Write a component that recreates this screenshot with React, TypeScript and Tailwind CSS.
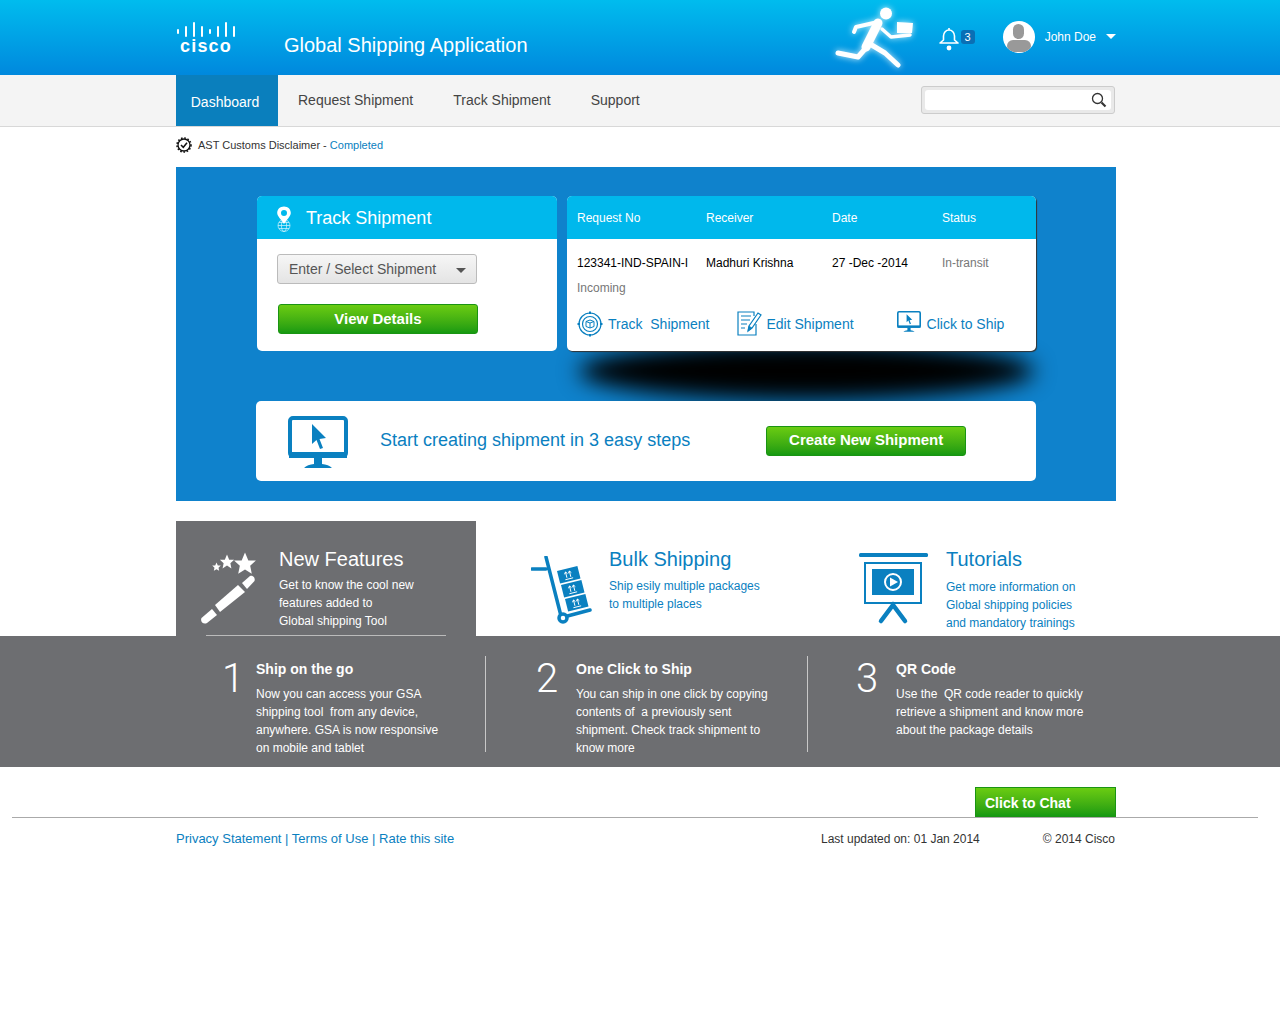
const greenBtn = 'bg-gradient-to-b from-[#6acc12] to-[#159a12] border border-[#1a9413] text-white font-bold';

function CiscoLogo() {
    const bars = [
        [1, 8, 5], [9, 5, 11], [17, 1, 15], [25, 5, 11], [33, 8, 5], [41, 5, 11], [49, 1, 15], [57, 5, 11],
    ];
    return (
        <div className="w-[60px] flex flex-col items-center">
            <svg width="60" height="16" viewBox="0 0 60 16" fill="#fff">
                {bars.map(([x, y, h]) => (
                    <rect key={x} x={x} y={y} width="2" height={h} rx="1" />
                ))}
            </svg>
            <span className="text-[18px] leading-[16px] font-bold tracking-[1.2px] text-white mt-[1px]">cisco</span>
        </div>
    );
}

function Runner() {
    return (
        <svg width="80" height="62" viewBox="0 0 80 62" className="drop-shadow-[0_0_3px_rgba(255,255,255,0.8)]">
            <circle cx="51" cy="6.5" r="6" fill="#fff" />
            <g fill="none" stroke="#fff" strokeLinecap="round" strokeLinejoin="round">
                <path d="M43 15 L21 20 L19 25" strokeWidth="4" />
                <path d="M43 16 L31 40" strokeWidth="9" />
                <path d="M30 42 L23 50 L3 46" strokeWidth="5" />
                <path d="M35 37 L50 46 L63 58" strokeWidth="5" />
                <path d="M47 22 L56 30 L75 28" strokeWidth="3.5" />
            </g>
            <path d="M62 15 L78 16 L77 26 L62 26 Z" fill="#fff" />
        </svg>
    );
}

function NotifyBell() {
    return (
        <svg width="20" height="24" viewBox="0 0 20 24" fill="none" stroke="#fff" strokeWidth="1.6" strokeLinejoin="round">
            <path d="M10 1 V3 M4.5 13 V9 C4.5 5.5 7 3 10 3 C13 3 15.5 5.5 15.5 9 V13 L19 16 H1 Z" />
            <circle cx="10" cy="21" r="2.4" fill="#fff" stroke="none" />
        </svg>
    );
}

function GearCheck() {
    return (
        <svg width="16" height="16" viewBox="0 0 16 16" fill="none" stroke="#111">
            <circle cx="8" cy="8" r="6" strokeWidth="1.3" />
            <circle cx="8" cy="8" r="7" strokeWidth="1.6" strokeDasharray="1.6 1.7" />
            <path d="M5 8 L7.3 10.3 L11 5.8" strokeWidth="1.5" />
        </svg>
    );
}

function PinGlobe() {
    return (
        <svg width="16" height="26" viewBox="0 0 16 26" fill="none">
            <g stroke="#fff" strokeWidth="0.7" opacity="0.85">
                <circle cx="8" cy="19.5" r="6" />
                <ellipse cx="8" cy="19.5" rx="2.6" ry="6" />
                <path d="M2 19.5 H14 M3 16.5 H13 M3 22.5 H13" />
            </g>
            <path fillRule="evenodd" clipRule="evenodd" d="M8 0.5 C4 0.5 1.2 3.3 1.2 7 C1.2 10.5 5.5 13.5 8 18 C10.5 13.5 14.8 10.5 14.8 7 C14.8 3.3 12 0.5 8 0.5 Z M8 4 A3 3 0 1 1 8 10 A3 3 0 1 1 8 4 Z" fill="#fff" />
        </svg>
    );
}

function TrackIcon() {
    return (
        <svg width="26" height="26" viewBox="0 0 26 26" fill="none" stroke="#0a80c0">
            <circle cx="13" cy="13" r="11" strokeWidth="1.2" />
            <circle cx="13" cy="13" r="7.5" strokeWidth="1.2" />
            <path d="M9 10.5 L13 9 L17 10.5 V15.5 L13 17 L9 15.5 Z M9 10.5 L13 12 L17 10.5 M13 12 V17" strokeWidth="1" />
            <path d="M13 0.5 V3 M13 23 V25.5 M0.5 13 H3 M23 13 H25.5" strokeWidth="2" />
        </svg>
    );
}

function EditIcon() {
    return (
        <svg width="25" height="25" viewBox="0 0 25 25" fill="none" stroke="#0a80c0">
            <path d="M17 5 V1 H1 V24 H19 V13" strokeWidth="1.2" />
            <path d="M4 5 H14 M4 9 H13 M4 13 H10 M4 17 H8" strokeWidth="1.2" />
            <path d="M11 20 L12 15 L21 2 L24 4 L15 17 Z" fill="#fff" strokeWidth="1.2" />
            <path d="M11 20 L12 15 L15 17 Z" fill="#0a80c0" strokeWidth="0.5" />
        </svg>
    );
}

function MonitorIcon({ size }: { size: number }) {
    return (
        <svg width={size} height={(size * 52) / 60} viewBox="0 0 60 52" fill="none" className="block">
            <rect x="2" y="2" width="56" height="38" rx="3" stroke="#0a80c0" strokeWidth="4" />
            <rect x="1" y="36" width="58" height="6" fill="#0a80c0" />
            <path d="M24 8 L24 28 L28.5 24 L32 33 L35 32 L31.5 23 L38 22 Z" fill="#0a80c0" />
            <path d="M26 42 H34 V48 C38 48.500 42 49.500 44 52 H16 C18 49.500 22 48.500 26 48 Z" fill="#0a80c0" />
        </svg>
    );
}

function Wand() {
    const star = 'M0 -10 L2.9 -3.1 L9.5 -3.1 L4.5 1.6 L5.9 8.5 L0 4.8 L-5.9 8.5 L-4.5 1.6 L-9.5 -3.1 L-2.9 -3.1 Z';
    return (
        <svg width="56" height="78" viewBox="0 0 56 78" fill="#fff">
            <path d={star} transform="translate(44 16) scale(1.15)" />
            <path d={star} transform="translate(26 14) scale(0.75)" />
            <path d={star} transform="translate(15.5 19) scale(0.45)" />
            <path d="M41 35 L49 28 C52 27 54.500 30 53.500 33 L46 41 Z" />
            <path d="M14 57 L37 37 L44 44 L19 64 Z" />
            <path d="M0.500 70 L11 61 L16 67 L6 75 C2 77 -1 73 0.500 70 Z" />
        </svg>
    );
}

function Trolley() {
    return (
        <svg width="62" height="72" viewBox="0 0 62 72">
            <path d="M1 13 H15 M15 1 L30 60 M29 62 L59 54" fill="none" stroke="#0a80c0" strokeWidth="3.5" strokeLinecap="round" />
            <circle cx="32" cy="62" r="4" fill="#fff" stroke="#0a80c0" strokeWidth="3.5" />
            {[[26, 15], [30, 29], [34, 43]].map(([x, y]) => (
                <g key={y} transform={`translate(${x} ${y}) rotate(-14)`}>
                    <rect width="21" height="13" fill="#0a80c0" />
                    <path d="M8 3 V9 M12 3 V9 M6 10.5 H14 M6.5 5 L8 3 L9.5 5 M10.5 5 L12 3 L13.5 5" stroke="#fff" fill="none" strokeWidth="0.9" />
                </g>
            ))}
        </svg>
    );
}

function Screen() {
    return (
        <svg width="70" height="72" viewBox="0 0 70 72">
            <rect x="0" y="0" width="69" height="4" rx="1.5" fill="#0a80c0" />
            <rect x="6" y="10" width="56" height="40" fill="#fff" stroke="#0a80c0" strokeWidth="2" />
            <rect x="13" y="16" width="42" height="26" fill="#0a80c0" />
            <circle cx="34" cy="29" r="8" fill="none" stroke="#fff" strokeWidth="2" />
            <path d="M31 24.5 L39 29 L31 33.5 Z" fill="#fff" />
            <path d="M22 68 L34 52 L46 68" fill="none" stroke="#0a80c0" strokeWidth="4.5" strokeLinecap="round" />
        </svg>
    );
}

function Tip({ n, title, lines, cls, numCls }: { n: string; title: string; lines: string[]; cls: string; numCls: string }) {
    return (
        <div className={`flex h-[96px] ${cls}`}>
            <div className={`w-[40px] font-['Roboto',sans-serif] text-[40px] leading-[46px] text-white font-light ${numCls}`}>{n}</div>
            <div className="pt-[4px]">
                <div className="text-[14px] leading-[18px] font-bold text-white">{title}</div>
                <div className="mt-[7px] text-[12px] leading-[18px] text-white whitespace-pre">
                    {lines.map((l) => (
                        <div key={l}>{l}</div>
                    ))}
                </div>
            </div>
        </div>
    );
}

export default function App() {
    return (
        <div className="min-h-[1030px] bg-white text-[#333] font-['Liberation_Sans',Arial,sans-serif]">
            {/* HEADER */}
            <div className="h-[75px] bg-gradient-to-b from-[#00bcee] to-[#0088dd]">
                <div className="ml-[176px] w-[940px] h-full flex items-center relative">
                    <CiscoLogo />
                    <div className="ml-[48px] text-[20px] leading-[24px] text-white mt-[14px]">Global Shipping Application</div>
                    <div className="ml-auto flex items-center">
                        <div className="mt-[1px] mr-[24px]">
                            <Runner />
                        </div>
                        <div className="flex items-center mr-[28px] mt-[3px]">
                            <NotifyBell />
                            <span className="-mt-[5px] ml-[2px] w-[14px] h-[14px] rounded-[3px] bg-[#0a6fb5] text-white text-[11px] leading-[14px] text-center">3</span>
                        </div>
                        <div className="w-[32px] h-[32px] rounded-full bg-white overflow-hidden flex flex-col items-center -mt-[2px]">
                            <span className="mt-[3px] w-[11px] h-[15px] rounded-full bg-[#999]" />
                            <span className="mt-[1px] w-[24px] h-[12px] rounded-[6px] bg-[#999]" />
                        </div>
                        <span className="ml-[10px] text-[12px] text-white -mt-[2px]">John Doe</span>
                        <span className="ml-[10px] -mt-[3px] w-0 h-0 border-x-[5px] border-x-transparent border-t-[5px] border-t-white" />
                    </div>
                </div>
            </div>

            {/* NAV */}
            <div className="h-[52px] bg-[#f4f4f4] border-b border-[#d8d8d8]">
                <div className="ml-[176px] w-[940px] h-[51px] flex items-center text-[14px] text-[#444]">
                    <div className="w-[102px] h-full bg-[#0a7fbd] text-white flex items-center justify-center pt-[3px] pr-[4px]">Dashboard</div>
                    <span className="ml-[20px]">Request Shipment</span>
                    <span className="ml-[40px]">Track Shipment</span>
                    <span className="ml-[40px]">Support</span>
                    <div className="ml-auto mr-[1px] -mt-[2px] w-[194px] h-[28px] rounded-[3px] border border-[#ccc] bg-[#e9e9e9] p-[3px]">
                        <div className="h-full rounded-[3px] bg-white flex items-center justify-end pr-[4px]">
                            <svg width="16" height="16" viewBox="0 0 16 16" fill="none" stroke="#333">
                                <circle cx="6.5" cy="6.5" r="5" strokeWidth="1.3" />
                                <path d="M10.5 10.5 L14.5 14.5" strokeWidth="2.2" />
                            </svg>
                        </div>
                    </div>
                </div>
            </div>

            <div className="ml-[176px] w-[940px]">
                {/* DISCLAIMER */}
                <div className="h-[40px] flex items-center gap-[6px] text-[11px] text-[#333] pb-[4px]">
                    <GearCheck />
                    <span>
                        AST Customs Disclaimer - <span className="text-[#0a80c0]">Completed</span>
                    </span>
                </div>

                {/* BLUE PANEL */}
                <div className="h-[334px] bg-[#0f82cc] pt-[29px] pl-[80px] pr-[80px]">
                    <div className="flex items-start h-[155px] gap-[10px] pl-[1px]">
                        <div className="w-[300px] h-[155px] bg-white rounded-[5px] overflow-hidden">
                            <div className="h-[43px] bg-[#00b8ec] flex items-center pl-[19px]">
                                <span className="mt-[2px]"><PinGlobe /></span>
                                <span className="ml-[14px] mt-[2px] text-[18px] text-white">Track Shipment</span>
                            </div>
                            <div className="ml-[20px] mt-[15px] w-[200px] h-[30px] rounded-[3px] border border-[#bbb] bg-gradient-to-b from-[#f6f6f6] to-[#e4e4e4] flex items-center pl-[11px] pr-[10px] text-[14px] text-[#555]">
                                Enter / Select Shipment
                                <span className="ml-auto mt-[2px] w-0 h-0 border-x-[5px] border-x-transparent border-t-[5px] border-t-[#555]" />
                            </div>
                            <div className={`ml-[21px] mt-[20px] w-[200px] h-[30px] rounded-[3px] flex items-center justify-center text-[15px] ${greenBtn}`}>
                                View Details
                            </div>
                        </div>
                        <div className="relative w-[469px] h-[155px]">
                            <div className="absolute left-[12px] right-[2px] top-[146px] h-[58px] rounded-[50%] bg-black blur-[11px]" />
                            <div className="relative h-full bg-white rounded-[5px] overflow-hidden shadow-[1px_1px_1px_#333]">
                                <div className="h-[43px] bg-[#00b8ec] grid grid-cols-[129px_126px_110px_1fr] items-center pl-[10px] text-[12px] text-white">
                                    <span>Request No</span>
                                    <span>Receiver</span>
                                    <span>Date</span>
                                    <span>Status</span>
                                </div>
                                <div className="mt-[15px] grid grid-cols-[129px_126px_110px_1fr] pl-[10px] text-[12px] leading-[18px] text-black">
                                    <span>123341-IND-SPAIN-I</span>
                                    <span>Madhuri Krishna</span>
                                    <span>27 -Dec -2014</span>
                                    <span className="text-[#777]">In-transit</span>
                                </div>
                                <div className="mt-[7px] pl-[10px] text-[12px] leading-[18px] text-[#777]">Incoming</div>
                                <div className="mt-[14px] pl-[10px] flex items-center h-[26px] text-[14px] text-[#0a80c0]">
                                    <TrackIcon />
                                    <span className="ml-[5px] whitespace-pre">Track  Shipment</span>
                                    <span className="ml-[28px] mb-[2px]"><EditIcon /></span>
                                    <span className="ml-[4px]">Edit Shipment</span>
                                    <span className="ml-[43px] mb-[5px]"><MonitorIcon size={24} /></span>
                                    <span className="ml-[6px]">Click to Ship</span>
                                </div>
                            </div>
                        </div>
                    </div>
                    <div className="relative mt-[50px] h-[80px] bg-white rounded-[5px] flex items-center pl-[32px]">
                        <span className="mt-[1px]"><MonitorIcon size={60} /></span>
                        <span className="ml-[32px] text-[18px] text-[#0a80c0] -mt-[1px]">Start creating shipment in 3 easy steps</span>
                        <div className={`ml-[76px] w-[200px] h-[30px] rounded-[3px] flex items-center justify-center text-[15px] pb-[2px] ${greenBtn}`}>
                            Create New Shipment
                        </div>
                    </div>
                </div>

                {/* FEATURES */}
                <div className="mt-[20px] h-[115px] flex">
                    <div className="w-[300px] h-full bg-[#6d6e71] relative flex pl-[25px] pt-[27px] text-white">
                        <Wand />
                        <div className="ml-[22px] -mt-[1px]">
                            <div className="text-[20px] leading-[24px]">New Features</div>
                            <div className="mt-[5px] text-[12px] leading-[18px]">
                                <div>Get to know the cool new</div>
                                <div>features added to</div>
                                <div>Global shipping Tool</div>
                            </div>
                        </div>
                        <div className="absolute left-[30px] bottom-0 w-[240px] h-px bg-[#bbb]" />
                    </div>
                    <div className="ml-[55px] w-[328px] flex pt-[35px] text-[#0a80c0]">
                        <Trolley />
                        <div className="ml-[16px] -mt-[9px]">
                            <div className="text-[20px] leading-[24px]">Bulk Shipping</div>
                            <div className="mt-[6px] text-[12px] leading-[18px]">
                                <div>Ship esily multiple packages</div>
                                <div>to multiple places</div>
                            </div>
                        </div>
                    </div>
                    <div className="flex pt-[32px] text-[#0a80c0]">
                        <Screen />
                        <div className="ml-[17px] -mt-[6px]">
                            <div className="text-[20px] leading-[24px]">Tutorials</div>
                            <div className="mt-[7px] text-[12px] leading-[18px]">
                                <div>Get more information on</div>
                                <div>Global shipping policies</div>
                                <div>and mandatory trainings</div>
                            </div>
                        </div>
                    </div>
                </div>
            </div>

            {/* TIPS BAND */}
            <div className="h-[131px] bg-[#6d6e71] pt-[20px]">
                <div className="ml-[176px] w-[940px] flex">
                    <Tip
                        n="1"
                        title="Ship on the go"
                        cls="w-[310px] pl-[40px] border-r border-[#c8c8c8]"
                        numCls="pl-[6px]"
                        lines={['Now you can access your GSA', 'shipping tool  from any device,', 'anywhere. GSA is now responsive', 'on mobile and tablet']}
                    />
                    <Tip
                        n="2"
                        title="One Click to Ship"
                        cls="w-[322px] pl-[50px] border-r border-[#c8c8c8]"
                        numCls=""
                        lines={['You can ship in one click by copying', 'contents of  a previously sent', 'shipment. Check track shipment to', 'know more']}
                    />
                    <Tip
                        n="3"
                        title="QR Code"
                        cls="pl-[48px]"
                        numCls=""
                        lines={['Use the  QR code reader to quickly', 'retrieve a shipment and know more', 'about the package details']}
                    />
                </div>
            </div>

            {/* FOOTER */}
            <div className="mt-[20px] ml-[12px] w-[1246px] h-[31px] border-b border-[#aaa] flex justify-end pr-[142px]">
                <div className={`w-[141px] h-[30px] flex items-center pl-[9px] pt-[2px] text-[14px] ${greenBtn}`}>Click to Chat</div>
            </div>
            <div className="ml-[176px] w-[940px] mt-[12px] flex items-center text-[13px] leading-[18px]">
                <span className="text-[#0a80c0]">Privacy Statement | Terms of Use | Rate this site</span>
                <span className="ml-auto text-[12px] text-[#333]">Last updated on: 01 Jan 2014</span>
                <span className="ml-[63px] mr-[1px] text-[12px] text-[#333]">© 2014 Cisco</span>
            </div>
        </div>
    );
}
